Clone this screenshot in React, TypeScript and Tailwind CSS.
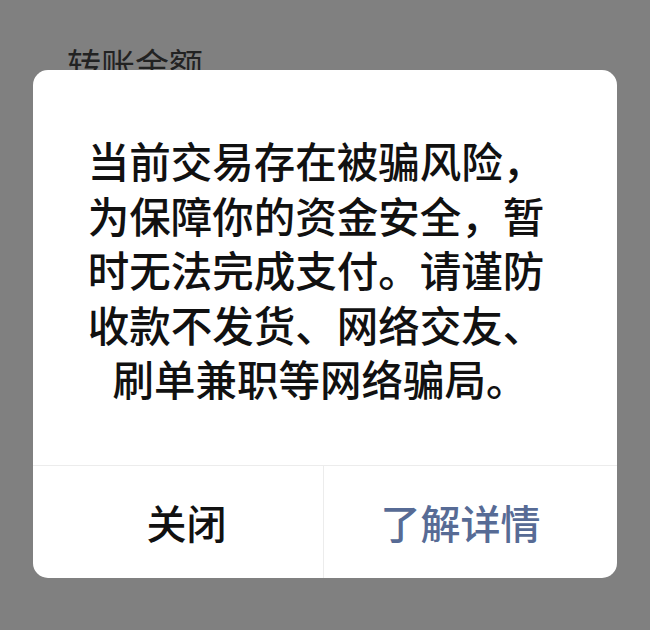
const cjk = {
  fontFamily: '"Noto Sans CJK SC", "Noto Sans", sans-serif',
};

const lines = [
  "当前交易存在被骗风险，",
  "为保障你的资金安全，暂",
  "时无法完成支付。请谨防",
  "收款不发货、网络交友、",
  "刷单兼职等网络骗局。",
];

export default function App() {
  return (
    <div className="relative h-[630px] w-[650px] overflow-hidden bg-[#808080]" style={cjk}>
      {/* page under the mask */}
      <div className="pl-[67px] pt-[44px] text-[34px] leading-[40px] text-[#222]">
        转账金额
      </div>

      {/* risk dialog */}
      <div className="absolute left-[33px] top-[70px] flex w-[584px] flex-col overflow-hidden rounded-[15px] bg-white">
        <div className="flex h-[395px] flex-col items-center pl-[38px] pr-[56px] pt-[63px] text-center text-[41.5px] font-medium leading-[54.5px] text-[#111]">
          {lines.map((l, i) => (
            <div key={l} className={i === 4 ? "whitespace-nowrap pl-[8px]" : "whitespace-nowrap"}>
              {l}
            </div>
          ))}
        </div>
        <div className="flex h-[113px] border-t border-[#ececec]">
          <button className="flex flex-1 items-center justify-center border-r border-[#ececec] pl-[17px] text-[40px] font-medium text-[#111]">
            关闭
          </button>
          <button className="flex flex-1 items-center justify-center pr-[20px] text-[40px] font-medium text-[#576b95]">
            了解详情
          </button>
        </div>
      </div>
    </div>
  );
}
